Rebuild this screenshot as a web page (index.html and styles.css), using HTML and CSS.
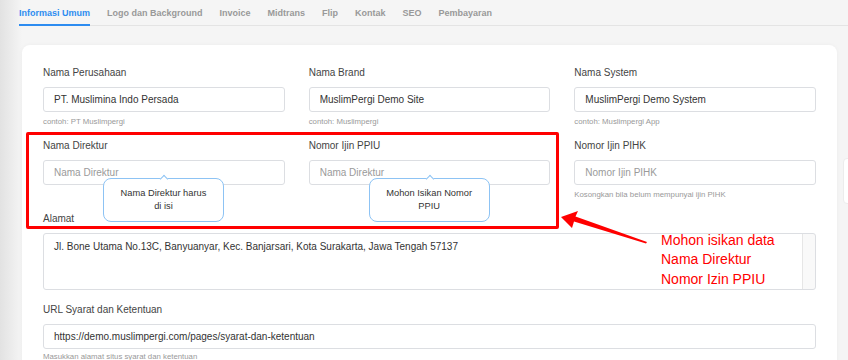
FILE: index.html
```html
<!DOCTYPE html>
<html lang="id">
<head>
    <meta charset="UTF-8">
    <meta name="viewport" content="width=device-width, initial-scale=1.0">
    <title>Pengaturan - Informasi Umum</title>
    <link rel="stylesheet" href="styles.css">
</head>
<body>
    <div class="tabs">
        <div class="tab active">Informasi Umum</div>
        <div class="tab">Logo dan Background</div>
        <div class="tab">Invoice</div>
        <div class="tab">Midtrans</div>
        <div class="tab">Flip</div>
        <div class="tab">Kontak</div>
        <div class="tab">SEO</div>
        <div class="tab">Pembayaran</div>
    </div>

    <div class="layout">
        <div class="card">
            <div class="form-grid">
                <div class="form-group">
                    <label>Nama Perusahaan</label>
                    <div class="field"><input type="text" value="PT. Muslimina Indo Persada"></div>
                    <div class="help">contoh: PT Muslimpergi</div>
                </div>
                <div class="form-group">
                    <label>Nama Brand</label>
                    <div class="field"><input type="text" value="MuslimPergi Demo Site"></div>
                    <div class="help">contoh: Muslimpergi</div>
                </div>
                <div class="form-group">
                    <label>Nama System</label>
                    <div class="field"><input type="text" value="MuslimPergi Demo System"></div>
                    <div class="help">contoh: Muslimpergi App</div>
                </div>

                <div class="form-group">
                    <label>Nama Direktur</label>
                    <div class="field">
                        <input type="text" placeholder="Nama Direktur">
                        <div class="tooltip">Nama Direktur harus<br>di isi</div>
                    </div>
                </div>
                <div class="form-group">
                    <label>Nomor Ijin PPIU</label>
                    <div class="field">
                        <input type="text" placeholder="Nama Direktur">
                        <div class="tooltip">Mohon Isikan Nomor<br>PPIU</div>
                    </div>
                </div>
                <div class="form-group">
                    <label>Nomor Ijin PIHK</label>
                    <div class="field"><input type="text" placeholder="Nomor Ijin PIHK"></div>
                    <div class="help">Kosongkan bila belum mempunyai ijin PIHK</div>
                </div>
            </div>

            <div class="form-group wide">
                <label>Alamat</label>
                <div class="field"><textarea>Jl. Bone Utama No.13C, Banyuanyar, Kec. Banjarsari, Kota Surakarta, Jawa Tengah 57137</textarea></div>
            </div>

            <div class="form-group wide url-group">
                <label>URL Syarat dan Ketentuan</label>
                <div class="field"><input type="text" value="https://demo.muslimpergi.com/pages/syarat-dan-ketentuan"></div>
                <div class="help">Masukkan alamat situs syarat dan ketentuan</div>
            </div>

            <!-- anotasi screenshot -->
            <div class="mark-box"></div>
            <svg class="mark-arrow" width="100" height="40" viewBox="0 0 100 40">
                <polygon points="0,8 17,2 14.5,7.5 86,33 85,34.5 13,12.5 11,19" fill="#ff0000"/>
            </svg>
            <div class="mark-note">
                Mohon isikan data<br>
                Nama Direktur<br>
                Nomor Izin PPIU
            </div>
        </div>

        <div class="side-card"></div>
    </div>
</body>
</html>
```

FILE: styles.css
```css
body {
    font-family: "Liberation Sans", Arial, Helvetica, sans-serif;
    margin: 0;
    height: 360px;
    overflow: hidden;
    background: linear-gradient(to right, #e2e2e2, #f5f5f5 22px);
    color: #333;
}
.tabs {
    display: flex;
    margin-left: 19px;
    border-bottom: 1px solid #e4e4e4;
}
.tab {
    font-size: 9px;
    line-height: 11px;
    font-weight: bold;
    color: #999;
    padding: 8px 0 5px;
    margin-right: 17px;
    margin-bottom: -1px;
    border-bottom: 2px solid transparent;
}
.tab.active {
    color: #2d8cf0;
    border-bottom-color: #2d8cf0;
}
.layout {
    display: flex;
    gap: 6px;
    padding-left: 22px;
    margin-top: 19px;
}
.card {
    position: relative;
    flex: 0 0 815px;
    box-sizing: border-box;
    background-color: white;
    border-radius: 8px;
    padding: 22px 21px;
    height: 400px;
    box-shadow: 0 0 4px rgba(0,0,0,0.04);
}
.side-card {
    flex: 0 0 60px;
    height: 44px;
    margin-top: 113px;
    background-color: white;
    border: 1px solid #ececec;
    border-radius: 4px;
}
.form-grid {
    display: grid;
    grid-template-columns: repeat(3, 1fr);
    column-gap: 24px;
    row-gap: 13px;
}
.form-group label {
    display: block;
    font-size: 10px;
    line-height: 12px;
    margin-bottom: 8px;
    color: #444;
}
.field {
    position: relative;
}
.form-group input[type="text"],
.form-group textarea {
    display: block;
    width: 100%;
    height: 25px;
    box-sizing: border-box;
    padding: 0 10px;
    border: 1px solid #dcdee2;
    border-radius: 3px;
    font-family: inherit;
    font-size: 10px;
    color: #333;
    background-color: white;
    outline: none;
}
.form-group input::placeholder {
    color: #9a9a9a;
}
.form-group textarea {
    height: 57px;
    padding: 7px 22px 7px 10px;
    line-height: 12px;
    resize: none;
    overflow: hidden;
    /* jalur scrollbar di sisi kanan */
    background: linear-gradient(to left, #f9f9f9 12px, #e6e6e6 12px, #e6e6e6 13px, white 13px);
}
.help {
    font-size: 7.8px;
    line-height: 10px;
    margin-top: 5px;
    color: #999;
}
.wide {
    margin-top: 13px;
}
.url-group {
    margin-top: 14px;
}
.url-group .help {
    margin-top: 3px;
}
.tooltip {
    position: absolute;
    left: 60px;
    top: 18px;
    width: 121px;
    box-sizing: border-box;
    padding: 8px 6px;
    background-color: white;
    border: 1px solid #8dc3f4;
    border-radius: 8px;
    font-size: 9.3px;
    line-height: 13px;
    text-align: center;
    color: #333;
}
.tooltip::before {
    content: "";
    position: absolute;
    top: -3.5px;
    left: 57px;
    width: 5px;
    height: 5px;
    background-color: white;
    border-left: 1px solid #8dc3f4;
    border-top: 1px solid #8dc3f4;
    transform: rotate(45deg);
}
.mark-box {
    position: absolute;
    left: 4px;
    top: 87px;
    width: 533px;
    height: 97px;
    box-sizing: border-box;
    border: 3px solid #ff0000;
    border-radius: 2px;
}
.mark-arrow {
    position: absolute;
    left: 539px;
    top: 164px;
}
.mark-note {
    position: absolute;
    left: 639px;
    top: 186px;
    font-size: 14px;
    line-height: 19.3px;
    color: #ff0000;
}
```
